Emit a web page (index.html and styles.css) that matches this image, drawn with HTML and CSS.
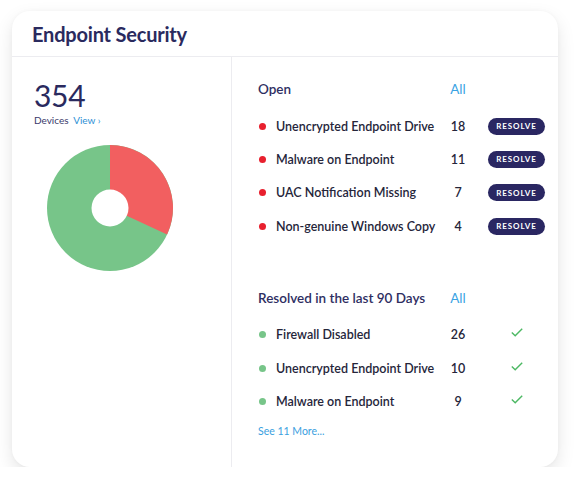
FILE: index.html
```html
<!DOCTYPE html>
<html>
<head>
<meta charset="utf-8">
<link rel="stylesheet" href="styles.css">
</head>
<body>
<div class="card">
  <div class="card-header"><h1 class="title">Endpoint Security</h1></div>
  <div class="card-body">
    <div class="left">
      <div class="big-number">354</div>
      <div class="devices">Devices <a class="view">View ›</a></div>
      <svg class="pie" width="126" height="126" viewBox="0 0 126 126">
        <circle cx="63" cy="63" r="63" fill="#77c589"/>
        <path d="M63,63 L63,0 A63,63 0 0 1 120.1,89.6 Z" fill="#f25f60"/>
        <circle cx="63" cy="63" r="18.5" fill="#fff"/>
      </svg>
    </div>
    <div class="right">
      <div class="list-head"><span class="head-label">Open</span><span class="head-all">All</span></div>
      <div class="row"><span class="dot red"></span><span class="name">Unencrypted Endpoint Drive</span><span class="count">18</span><span class="btn">RESOLVE</span></div>
      <div class="row"><span class="dot red"></span><span class="name">Malware on Endpoint</span><span class="count">11</span><span class="btn">RESOLVE</span></div>
      <div class="row"><span class="dot red"></span><span class="name">UAC Notification Missing</span><span class="count">7</span><span class="btn">RESOLVE</span></div>
      <div class="row"><span class="dot red"></span><span class="name">Non-genuine Windows Copy</span><span class="count">4</span><span class="btn">RESOLVE</span></div>

      <div class="list-head second"><span class="head-label">Resolved in the last 90 Days</span><span class="head-all">All</span></div>
      <div class="row"><span class="dot green"></span><span class="name">Firewall Disabled</span><span class="count">26</span><span class="check"><svg width="12" height="9" viewBox="0 0 12 9"><path d="M0.8,4.6 L4.2,7.8 L11.2,0.8" fill="none" stroke="#4cb863" stroke-width="1.4"/></svg></span></div>
      <div class="row"><span class="dot green"></span><span class="name">Unencrypted Endpoint Drive</span><span class="count">10</span><span class="check"><svg width="12" height="9" viewBox="0 0 12 9"><path d="M0.8,4.6 L4.2,7.8 L11.2,0.8" fill="none" stroke="#4cb863" stroke-width="1.4"/></svg></span></div>
      <div class="row"><span class="dot green"></span><span class="name">Malware on Endpoint</span><span class="count">9</span><span class="check"><svg width="12" height="9" viewBox="0 0 12 9"><path d="M0.8,4.6 L4.2,7.8 L11.2,0.8" fill="none" stroke="#4cb863" stroke-width="1.4"/></svg></span></div>
      <a class="see-more">See 11 More...</a>
    </div>
  </div>
</div>
</body>
</html>
```

FILE: styles.css
```css
html, body {
  margin: 0;
  padding: 0;
  background: #ffffff;
}
body {
  font-family: "Lato", "Open Sans", sans-serif;
  color: #25253a;
}
.card {
  margin: 11px 0 0 12px;
  width: 546px;
  height: 456px;
  border-radius: 18px;
  background: #fff;
  box-shadow: 0 7px 18px rgba(0, 0, 0, 0.1), 0 0 4px rgba(0, 0, 0, 0.03);
  display: flex;
  flex-direction: column;
  overflow: hidden;
}
.card-header {
  height: 45px;
  border-bottom: 1px solid #ececf0;
  display: flex;
  align-items: center;
  padding-left: 20px;
  flex-shrink: 0;
}
.title {
  margin: 0;
  font-size: 20px;
  font-weight: 700;
  color: #2a2a5e;
  letter-spacing: -0.2px;
}
.card-body {
  flex: 1;
  display: grid;
  grid-template-columns: 220px 1fr;
}
.left {
  border-right: 1px solid #ececf0;
  padding: 21px 0 0 22px;
  display: flex;
  flex-direction: column;
}
.big-number {
  font-size: 30px;
  font-weight: 400;
  color: #2a2a5e;
  line-height: 34px;
  letter-spacing: -0.3px;
}
.devices {
  font-size: 10px;
  color: #3a3a6a;
  margin-top: 2px;
  line-height: 12px;
}
.view {
  color: #2d8fd5;
  margin-left: 2px;
}
.pie {
  margin: 19px 0 0 13px;
  display: block;
}
.right {
  padding: 22px 0 0 26px;
  display: flex;
  flex-direction: column;
}
.list-head {
  display: grid;
  grid-template-columns: 180px 40px;
  height: 20px;
  align-items: center;
  margin-bottom: 10.5px;
}
.list-head.second {
  margin-top: 45px;
}
.head-label {
  font-size: 13.5px;
  font-weight: 600;
  color: #2e2e62;
}
.head-all {
  font-size: 13.5px;
  color: #3aa3e3;
  text-align: center;
}
.row {
  display: grid;
  grid-template-columns: 18px 162px 40px 10px 57px;
  height: 33.3px;
  align-items: center;
}
.dot {
  width: 7px;
  height: 7px;
  border-radius: 50%;
  margin-left: 1px;
}
.dot.red { background: #e8202e; }
.dot.green { background: #77c589; }
.name {
  grid-column: 2;
  font-size: 12.5px;
  font-weight: 600;
  color: #25253a;
  white-space: nowrap;
}
.count {
  grid-column: 3;
  font-size: 12.5px;
  font-weight: 600;
  text-align: center;
  color: #25253a;
}
.btn {
  grid-column: 5;
  height: 17px;
  border-radius: 9px;
  background: #2a2762;
  color: #fff;
  font-size: 8px;
  font-weight: 700;
  letter-spacing: 0.9px;
  display: flex;
  align-items: center;
  justify-content: center;
}
.check {
  grid-column: 5;
  display: flex;
  justify-content: center;
  margin-top: -4px;
}
.check svg { display: block; }
.see-more {
  margin-top: 4.5px;
  font-size: 10.5px;
  color: #3aa0e0;
  line-height: 16px;
}
```
